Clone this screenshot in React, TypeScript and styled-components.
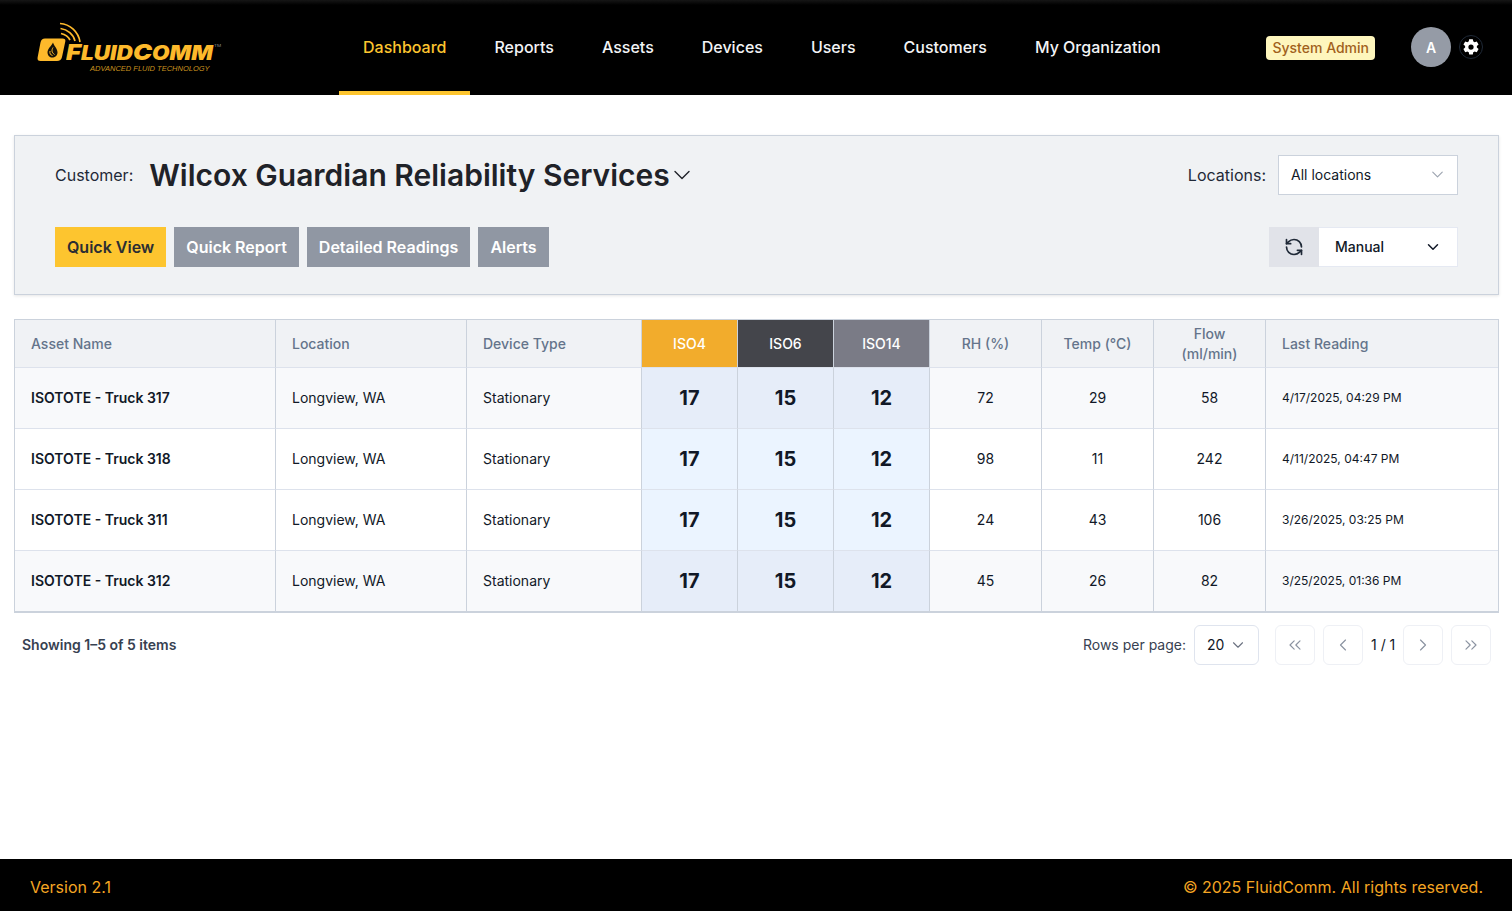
import React from "react";
import styled, { createGlobalStyle } from "styled-components";
import { ChevronDown, ChevronLeft, ChevronRight, ChevronsLeft, ChevronsRight, RefreshCcw } from "lucide-react";

const Global = createGlobalStyle`
  * { box-sizing: border-box; }
  html, body { margin: 0; padding: 0; background: #fff; }
  body { font-family: Inter, "Noto Sans", sans-serif; color: #111827; -webkit-font-smoothing: antialiased; }
`;

const Page = styled.div`
  min-height: 911px;
  height: 911px;
  display: flex;
  flex-direction: column;
`;

const Header = styled.header`
  height: 95px;
  flex: none;
  background: linear-gradient(#161616 0, #000 5px);
  display: flex;
  align-items: stretch;
  padding: 0 29px 0 37px;
`;

const LogoBox = styled.div`
  width: 302px;
  flex: none;
  display: flex;
  align-items: flex-start;
  padding-top: 22px;
`;

const LogoMark = styled.svg`
  width: 46px;
  height: 40px;
  flex: none;
`;

const LogoText = styled.div`
  display: flex;
  flex-direction: column;
  padding-top: 20px;
  margin-left: -17px;
`;

const LogoName = styled.div`
  font-family: Inter, sans-serif;
  font-style: italic;
  font-weight: 900;
  font-size: 22px;
  line-height: 21px;
  height: 21px;
  color: #fdb92b;
  white-space: nowrap;
  transform: scaleX(1.16);
  transform-origin: left;
  small { font-size: 19.5px; }
  sup { font-size: 4px; font-weight: 400; color: #888; vertical-align: 13px; line-height: 0; margin-left: 1px; font-style: normal; }
`;

const LogoTag = styled.div`
  font-family: "Liberation Sans", sans-serif;
  font-style: italic;
  font-size: 7.5px;
  line-height: 10px;
  color: #c9921f;
  margin: 1px 0 0 24px;
  white-space: nowrap;
`;

const Nav = styled.nav`
  display: flex;
  align-items: stretch;
`;

const NavItem = styled.a<{ $active?: boolean }>`
  display: flex;
  align-items: center;
  padding: 0 24px 0;
  font-size: 16px;
  font-weight: 500;
  color: ${(p) => (p.$active ? "#fdc52f" : "#f3f4f6")};
  border-bottom: 4px solid ${(p) => (p.$active ? "#fdc52f" : "transparent")};
  white-space: nowrap;
  span { position: relative; top: 1px; }
`;

const HeaderRight = styled.div`
  margin-left: auto;
  display: flex;
  align-items: center;
  padding-bottom: 1px;
`;

const RoleBadge = styled.span`
  height: 24px;
  margin-top: 2px;
  padding: 0 6px 1px;
  display: inline-flex;
  align-items: center;
  background: #fef6bd;
  border-radius: 4px;
  font-size: 14px;
  font-weight: 500;
  color: #a1611c;
  margin-right: 36px;
`;

const Avatar = styled.div`
  width: 40px;
  height: 40px;
  border-radius: 50%;
  background: #959ba6;
  color: #fff;
  font-size: 14px;
  font-weight: 600;
  display: flex;
  align-items: center;
  justify-content: center;
  margin-right: 8px;
`;

const GearButton = styled.div`
  width: 24px;
  height: 24px;
  border-radius: 50%;
  border: 1px solid #1f2937;
  display: flex;
  align-items: center;
  justify-content: center;
`;

const Main = styled.main`
  flex: 1;
  padding: 40px 13px 0 14px;
`;

const Card = styled.section`
  height: 160px;
  background: #f0f2f4;
  border: 1px solid #cbd2dc;
  box-shadow: 0 1px 3px rgba(0, 0, 0, 0.1);
  padding: 19px 40px 0;
  display: flex;
  flex-direction: column;
  gap: 32px;
`;

const CardRow = styled.div`
  height: 40px;
  display: flex;
  align-items: center;
  justify-content: space-between;
`;

const Group = styled.div`
  display: flex;
  align-items: center;
`;

const CustomerLabel = styled.span`
  font-size: 16px;
  color: #1f2937;
  margin-right: 16px;
`;

const CustomerName = styled.span`
  font-size: 30px;
  font-weight: 600;
  color: #1f2228;
  margin-right: -2px;
  white-space: nowrap;
`;

const LocationLabel = styled.span`
  font-size: 16px;
  color: #1f2937;
  margin-right: 12px;
`;

const LocationSelect = styled.div`
  width: 180px;
  height: 40px;
  background: #fff;
  border: 1px solid #cbd2dc;
  display: flex;
  align-items: center;
  justify-content: space-between;
  padding: 0 10px 1px 12px;
  font-size: 14px;
  color: #111827;
`;

const Tabs = styled.div`
  display: flex;
  gap: 8px;
`;

const Tab = styled.button<{ $active?: boolean }>`
  height: 40px;
  border: 0;
  padding: 0 12px;
  font-family: inherit;
  font-size: 16px;
  font-weight: 600;
  background: ${(p) => (p.$active ? "#fdc52f" : "#9097a3")};
  color: ${(p) => (p.$active ? "#2b2d33" : "#fff")};
`;

const RefreshBox = styled.div`
  width: 50px;
  height: 40px;
  background: #e1e3e9;
  display: flex;
  align-items: center;
  justify-content: center;
`;

const ManualSelect = styled.div`
  width: 139px;
  height: 40px;
  background: #fff;
  border: 1px solid #e5e9f2;
  border-left: 0;
  display: flex;
  align-items: center;
  justify-content: space-between;
  padding: 0 15px 1px 16px;
  font-size: 14px;
  font-weight: 500;
  color: #111827;
`;

const Table = styled.table`
  width: 1485px;
  margin-top: 24px;
  border-collapse: separate;
  border-spacing: 0;
  table-layout: fixed;
  border: 1px solid #cbd2dc;
  border-bottom-width: 2px;
`;

const HeadCell = styled.th<{ $bg?: string; $align?: string }>`
  height: 48px;
  padding: 0 16px;
  font-size: 14px;
  line-height: 20px;
  font-weight: 500;
  text-align: ${(p) => p.$align || "center"};
  background: ${(p) => p.$bg || "#f0f2f5"};
  color: ${(p) => (p.$bg ? "#fff" : "#64748b")};
  border-right: 1px solid #cbd2dc;
  border-bottom: 1px solid #dde2ec;
  &:last-child { border-right: 0; }
`;

const BodyRow = styled.tr<{ $tint?: boolean }>`
  background: ${(p) => (p.$tint ? "#f8f9fb" : "#fff")};
  --iso: ${(p) => (p.$tint ? "#e6edf9" : "#ebf4ff")};
  &:last-child td { border-bottom: 0; height: 60px; }
`;

const Cell = styled.td<{ $align?: string; $size?: number; $weight?: number; $iso?: boolean }>`
  height: 61px;
  padding: 0 16px ${(p) => (p.$iso ? 0 : 2)}px;
  font-size: ${(p) => p.$size || 14}px;
  font-weight: ${(p) => p.$weight || 400};
  text-align: ${(p) => p.$align || "center"};
  color: #111827;
  background: ${(p) => (p.$iso ? "var(--iso)" : "transparent")};
  border-right: 1px solid #cbd2dc;
  border-bottom: 1px solid #dde2ec;
  &:last-child { border-right: 0; }
`;

const Pager = styled.div`
  display: flex;
  align-items: center;
  justify-content: space-between;
  padding: 12px 8px 0;
`;

const ShowingText = styled.span`
  font-size: 14px;
  font-weight: 600;
  color: #374151;
  position: relative;
  top: -1px;
`;

const PagerRight = styled.div`
  display: flex;
  align-items: center;
`;

const RowsLabel = styled.span`
  font-size: 14px;
  color: #374151;
  margin-right: 8px;
  position: relative;
  top: -1px;
`;

const RowsSelect = styled.div`
  width: 65px;
  height: 40px;
  border: 1px solid #dfe4ee;
  border-radius: 6px;
  display: flex;
  align-items: center;
  justify-content: space-between;
  padding: 0 11px 1px 12px;
  font-size: 14px;
  color: #111827;
  margin-right: 16px;
`;

const PageButton = styled.div`
  width: 40px;
  height: 40px;
  border: 1px solid #eef0f5;
  border-radius: 6px;
  display: flex;
  align-items: center;
  justify-content: center;
  color: #8b93a1;
`;

const ButtonSet = styled.div`
  display: flex;
  align-items: center;
  gap: 8px;
`;

const PageLabel = styled.span`
  width: 24px;
  font-size: 14px;
  text-align: center;
  white-space: nowrap;
  color: #111827;
  position: relative;
  top: -1px;
`;

const Footer = styled.footer`
  height: 52px;
  flex: none;
  background: #000;
  color: #f5a623;
  font-size: 16px;
  display: flex;
  align-items: center;
  justify-content: space-between;
  padding: 4px 29px 0 30px;
`;

const navItems = ["Dashboard", "Reports", "Assets", "Devices", "Users", "Customers", "My Organization"];
const tabs = ["Quick View", "Quick Report", "Detailed Readings", "Alerts"];
const columns = [261, 191, 175, 96, 96, 96, 112, 112, 112, 232];
const rows = [
  { name: "ISOTOTE - Truck 317", rh: 72, temp: 29, flow: 58, last: "4/17/2025, 04:29 PM", tint: true },
  { name: "ISOTOTE - Truck 318", rh: 98, temp: 11, flow: 242, last: "4/11/2025, 04:47 PM", tint: false },
  { name: "ISOTOTE - Truck 311", rh: 24, temp: 43, flow: 106, last: "3/26/2025, 03:25 PM", tint: false },
  { name: "ISOTOTE - Truck 312", rh: 45, temp: 26, flow: 82, last: "3/25/2025, 01:36 PM", tint: true },
];

function Logo() {
  return (
    <LogoBox>
      <LogoMark viewBox="0 0 46 40" aria-hidden="true">
        <path d="M8 16.5H25.5Q29 16.5 28.3 19.5L25 35Q24.2 39 20 39H3.5Q0 39 .6 35.5L3.5 20.5Q4.3 16.5 8 16.5z" fill="#fdb92b" />
        <path d="M16 20.5C14.5 24 10.5 26.5 10.5 30.5C10.5 33.5 13 35.5 15 35.5C18 35.5 20.5 33.5 20.5 30.5C20.5 26.5 17 24 16 20.5z" fill="#14110a" />
        <path d="M13 29c-.5 2.5.5 4 2.5 4.5M16 25.5c-1.5 2.5-1.5 5 1.5 7" stroke="#fdb92b" strokeWidth="1" fill="none" />
        <g fill="none" stroke="#fdb92b" strokeWidth="1.7">
          <path d="M23 1.5C33 2 41.5 10 43 20" />
          <path d="M23.5 6.5C30.5 7.5 36.5 12.5 38 19" />
          <path d="M24 11.5C28 12.5 31.5 15 33 18" />
        </g>
      </LogoMark>
      <LogoText>
        <LogoName>F<small>LUID</small>C<small>OMM</small><sup>TM</sup></LogoName>
        <LogoTag>ADVANCED FLUID TECHNOLOGY</LogoTag>
      </LogoText>
    </LogoBox>
  );
}

function Gear() {
  return (
    <svg width="18" height="18" viewBox="0 0 24 24" aria-hidden="true">
      <path
        fill="#fff"
        fillRule="evenodd"
        d="M9.6 1.5h4.8l.7 3.1c.6.3 1.1.6 1.6.9l3-1 2.4 4.2-2.3 2.1c.1.6.1 1.2 0 1.8l2.3 2.1-2.4 4.2-3-1c-.5.4-1 .7-1.6.9l-.7 3.1H9.6l-.7-3.1c-.6-.2-1.1-.5-1.6-.9l-3 1-2.4-4.2 2.3-2.1c-.1-.6-.1-1.2 0-1.8L1.9 8.7l2.4-4.2 3 1c.5-.3 1-.6 1.6-.9l.7-3.1zM12 8.5a3.5 3.5 0 100 7 3.5 3.5 0 000-7z"
      />
    </svg>
  );
}

export default function App() {
  return (
    <Page>
      <Global />
      <Header>
        <Logo />
        <Nav>
          {navItems.map((n, i) => (
            <NavItem key={n} $active={i === 0}><span>{n}</span></NavItem>
          ))}
        </Nav>
        <HeaderRight>
          <RoleBadge>System Admin</RoleBadge>
          <Avatar>A</Avatar>
          <GearButton><Gear /></GearButton>
        </HeaderRight>
      </Header>
      <Main>
        <Card>
          <CardRow>
            <Group>
              <CustomerLabel>Customer:</CustomerLabel>
              <CustomerName>Wilcox Guardian Reliability Services</CustomerName>
              <ChevronDown size={28} strokeWidth={1.2} color="#1f2228" />
            </Group>
            <Group>
              <LocationLabel>Locations:</LocationLabel>
              <LocationSelect>
                All locations
                <ChevronDown size={19} strokeWidth={1.4} color="#9ca3af" />
              </LocationSelect>
            </Group>
          </CardRow>
          <CardRow>
            <Tabs>
              {tabs.map((t, i) => (
                <Tab key={t} $active={i === 0}>{t}</Tab>
              ))}
            </Tabs>
            <Group>
              <RefreshBox><RefreshCcw size={20} color="#1f2937" /></RefreshBox>
              <ManualSelect>
                Manual
                <ChevronDown size={18} color="#111827" />
              </ManualSelect>
            </Group>
          </CardRow>
        </Card>
        <Table>
          <colgroup>
            {columns.map((w, i) => <col key={i} style={{ width: w }} />)}
          </colgroup>
          <thead>
            <tr>
              <HeadCell $align="left">Asset Name</HeadCell>
              <HeadCell $align="left">Location</HeadCell>
              <HeadCell $align="left">Device Type</HeadCell>
              <HeadCell $bg="#f2ac2c">ISO4</HeadCell>
              <HeadCell $bg="#44454b">ISO6</HeadCell>
              <HeadCell $bg="#7a7b86">ISO14</HeadCell>
              <HeadCell>RH (%)</HeadCell>
              <HeadCell>Temp (°C)</HeadCell>
              <HeadCell>Flow (ml/min)</HeadCell>
              <HeadCell $align="left">Last Reading</HeadCell>
            </tr>
          </thead>
          <tbody>
            {rows.map((r) => (
              <BodyRow key={r.name} $tint={r.tint}>
                <Cell $align="left" $weight={600}>{r.name}</Cell>
                <Cell $align="left">Longview, WA</Cell>
                <Cell $align="left">Stationary</Cell>
                <Cell $iso $size={20} $weight={700}>17</Cell>
                <Cell $iso $size={20} $weight={700}>15</Cell>
                <Cell $iso $size={20} $weight={700}>12</Cell>
                <Cell>{r.rh}</Cell>
                <Cell>{r.temp}</Cell>
                <Cell>{r.flow}</Cell>
                <Cell $align="left" $size={12}>{r.last}</Cell>
              </BodyRow>
            ))}
          </tbody>
        </Table>
        <Pager>
          <ShowingText>Showing 1–5 of 5 items</ShowingText>
          <PagerRight>
            <RowsLabel>Rows per page:</RowsLabel>
            <RowsSelect>
              20
              <ChevronDown size={18} strokeWidth={1.5} color="#6b7280" />
            </RowsSelect>
            <ButtonSet>
              <PageButton><ChevronsLeft size={20} strokeWidth={1.4} /></PageButton>
              <PageButton><ChevronLeft size={20} strokeWidth={1.4} /></PageButton>
              <PageLabel>1 / 1</PageLabel>
              <PageButton><ChevronRight size={20} strokeWidth={1.4} /></PageButton>
              <PageButton><ChevronsRight size={20} strokeWidth={1.4} /></PageButton>
            </ButtonSet>
          </PagerRight>
        </Pager>
      </Main>
      <Footer>
        <span>Version 2.1</span>
        <span>© 2025 FluidComm. All rights reserved.</span>
      </Footer>
    </Page>
  );
}
